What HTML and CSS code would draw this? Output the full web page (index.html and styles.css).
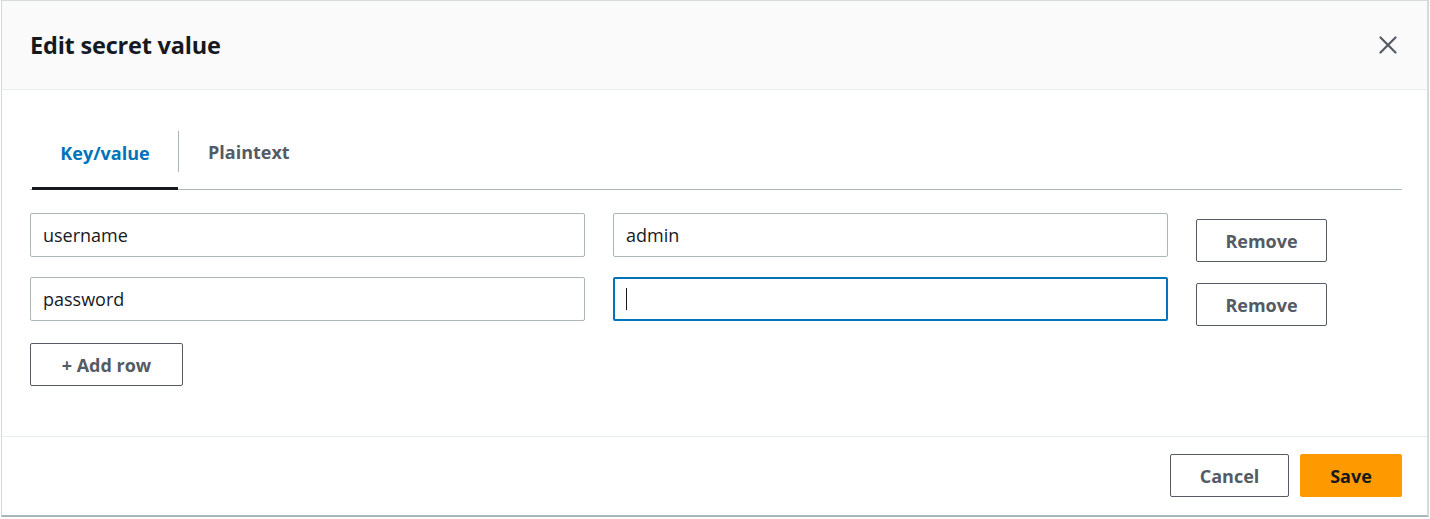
FILE: index.html
```html
<!DOCTYPE html>
<html lang="en">
<head>
<meta charset="utf-8">
<title>Edit secret value</title>
<link rel="stylesheet" href="styles.css">
</head>
<body>
<div class="modal">
  <header class="modal-header">
    <h1 class="modal-title">Edit secret value</h1>
    <button class="close-btn" aria-label="Close">
      <svg width="18" height="18" viewBox="0 0 18 18"><path d="M1.5 1.5 L16.5 16.5 M16.5 1.5 L1.5 16.5" stroke="#545b64" stroke-width="2.2" stroke-linecap="round" fill="none"/></svg>
    </button>
  </header>
  <div class="modal-body">
    <div class="tabs">
      <div class="tab tab-active">Key/value</div>
      <div class="tab-sep"></div>
      <div class="tab">Plaintext</div>
    </div>
    <div class="kv-grid">
      <input class="field" type="text" value="username">
      <input class="field" type="text" value="admin">
      <div class="remove-cell"><button class="btn">Remove</button></div>
      <input class="field" type="text" value="password">
      <div class="field field-focus"><span class="caret"></span></div>
      <div class="remove-cell"><button class="btn">Remove</button></div>
    </div>
    <button class="btn btn-add">+ Add row</button>
  </div>
  <footer class="modal-footer">
    <button class="btn btn-cancel">Cancel</button>
    <button class="btn btn-primary">Save</button>
  </footer>
</div>
</body>
</html>
```
FILE: styles.css
```css
* { box-sizing: border-box; }
html, body { margin: 0; padding: 0; background: #ffffff; }
body {
  font-family: "Open Sans", "Noto Sans", sans-serif;
  color: #16191f;
  width: 1430px;
  height: 519px;
  overflow: hidden;
}
.modal {
  margin-left: 1px;
  width: 1428px;
  height: 517px;
  border: 1px solid #d5dbdb;
  border-bottom: 2px solid #aab7b8;
  border-right: 2px solid #d5dbdb;
  display: flex;
  flex-direction: column;
  background: #fff;
}
.modal-header {
  height: 89px;
  background: #fafafa;
  border-bottom: 1px solid #eaeded;
  display: flex;
  align-items: center;
  justify-content: space-between;
  padding: 0 30px 0 28px;
}
.modal-title {
  margin: 0;
  font-size: 23.5px;
  font-weight: 700;
  color: #16191f;
  letter-spacing: -0.2px;
}
.close-btn {
  background: none;
  border: 0;
  padding: 0;
  width: 18px;
  height: 18px;
  display: flex;
  cursor: pointer;
}
.modal-body {
  padding: 41px 25px 0 28px;
  flex: 1;
  border-bottom: 1px solid #eaeded;
}
.tabs {
  display: flex;
  align-items: stretch;
  height: 59px;
  border-bottom: 1px solid #aab7b8;
}
.tab {
  font-size: 18px;
  font-weight: 700;
  color: #545b64;
  padding: 0 29px;
  display: flex;
  align-items: center;
  padding-bottom: 16px;
}
.tab-active {
  color: #0073bb;
  margin-left: 2px;
  width: 146px;
  justify-content: center;
  padding: 0 0 12px 0;
  border-bottom: 3px solid #16191f;
  margin-bottom: -1px;
}
.tab-sep {
  width: 1px;
  background: #aab7b8;
  margin: 0 0 17px 0;
}
.kv-grid {
  margin-top: 23px;
  display: grid;
  grid-template-columns: 555px 555px 206px;
  column-gap: 28px;
  row-gap: 15px;
}
.field {
  height: 44px;
  border: 1px solid #aab7b8;
  border-radius: 2px;
  padding: 0 12px;
  font-family: inherit;
  font-size: 18px;
  color: #16191f;
  background: #fff;
  outline: none;
  margin: 0;
  width: 100%;
  display: flex;
  align-items: center;
}
.field-focus {
  border: 2px solid #0073bb;
  padding-left: 11px;
}
.caret {
  width: 1px;
  height: 22px;
  background: #16191f;
}
.remove-cell {
  padding-top: 6px;
}
.btn {
  height: 43px;
  border: 1px solid #545b64;
  border-radius: 2px;
  background: #fff;
  color: #545b64;
  font-family: inherit;
  font-size: 18px;
  font-weight: 700;
  padding: 0 10px;
  cursor: pointer;
}
.remove-cell .btn { width: 131px; }
.btn-add {
  margin-top: 17px;
  width: 153px;
}
.modal-footer {
  height: 78px;
  display: flex;
  justify-content: flex-end;
  align-items: flex-start;
  gap: 11px;
  padding: 17px 25px 0 0;
}
.btn-cancel { width: 119px; }
.btn-primary {
  width: 102px;
  background: #ff9900;
  border-color: #ff9900;
  color: #16191f;
}
```
